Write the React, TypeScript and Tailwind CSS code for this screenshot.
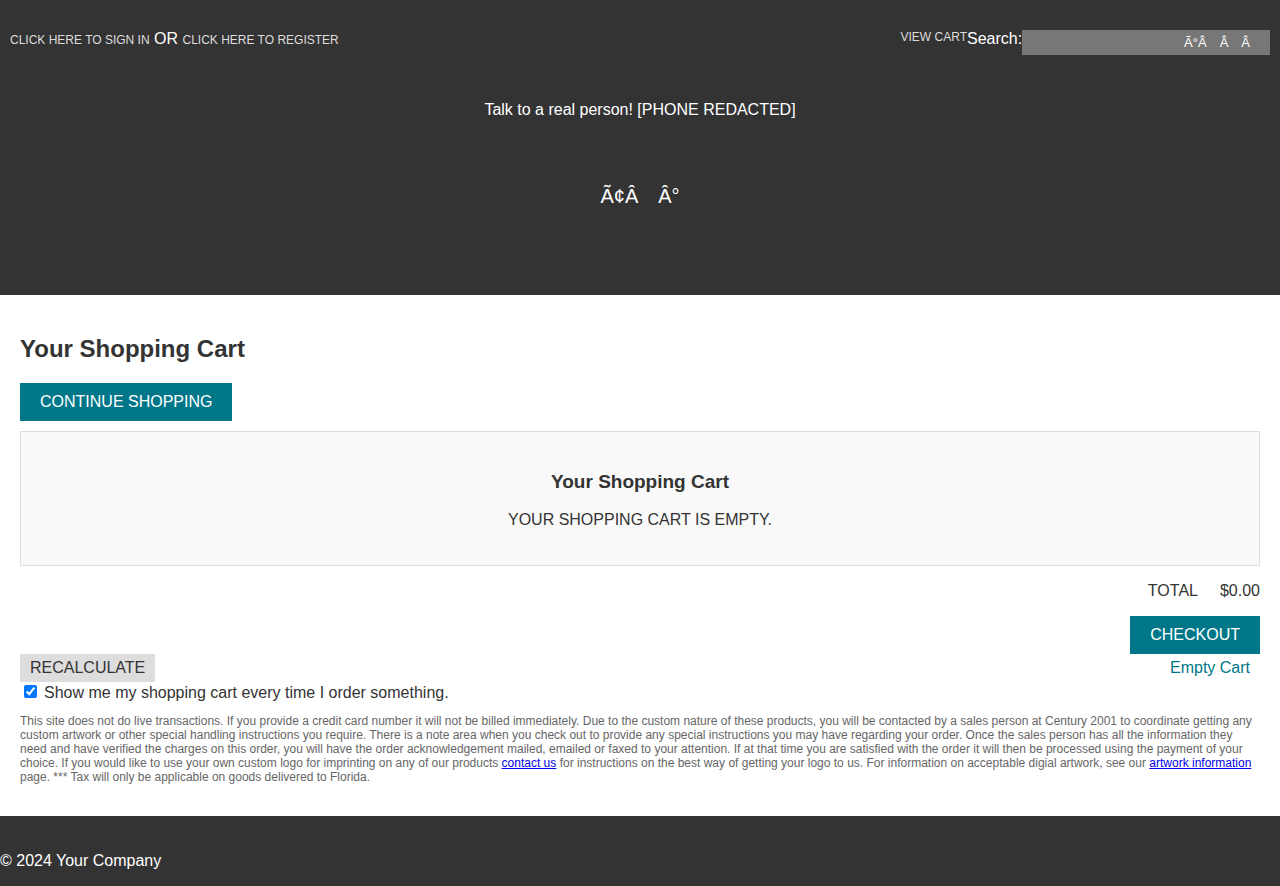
import { useState } from "react";

function Header() {
  return (
    <header className="flex flex-col bg-[#333] pb-[87px] text-white">
      <div className="flex items-start justify-between p-2.5 pt-[30px]">
        <p>
          <a href="#signin" className="text-[12px] text-[#ddd]">CLICK HERE TO SIGN IN</a>
          {" OR "}
          <a href="#register" className="text-[12px] text-[#ddd]">CLICK HERE TO REGISTER</a>
        </p>
        <form className="flex items-start" onSubmit={(e) => e.preventDefault()}>
          <a href="#cart" className="text-[12px] leading-[14px] text-[#ddd]">VIEW CART</a>
          <label htmlFor="search">Search:</label>
          <div className="flex h-[25px] bg-[#777]">
            <input id="search" type="text" className="w-[156px] bg-transparent px-1.5 text-[13px] outline-none" />
            <button type="submit" className="whitespace-pre pl-1.5 pr-[7px] text-[13px] leading-[25px] text-white">
              {"Ã°Â\u2003Â\u2003Â\u2003"}
            </button>
          </div>
        </form>
      </div>
      <p className="mt-9 text-center">Talk to a real person! [PHONE REDACTED]</p>
      <p className="mt-[66px] whitespace-pre text-center text-[20px] leading-[23px]">{"Ã¢Â\u2003Â°"}</p>
    </header>
  );
}

function Cart() {
  const [showCart, setShowCart] = useState(true);
  return (
    <main className="px-5 pb-8 pt-10">
      <h1 className="text-[24px] font-bold leading-7">Your Shopping Cart</h1>
      <button type="button" className="mt-5 block bg-[#007788] px-5 py-2.5 text-white">CONTINUE SHOPPING</button>
      <section className="mt-2.5 border border-[#ddd] bg-[#f9f9f9] px-5 pb-9 pt-[39px] text-center">
        <h2 className="text-[19px] font-bold leading-[21px]">Your Shopping Cart</h2>
        <p className="mt-[19px]">YOUR SHOPPING CART IS EMPTY.</p>
      </section>
      <dl className="mt-4 flex justify-end gap-[22px]">
        <dt>TOTAL</dt>
        <dd>$0.00</dd>
      </dl>
      <div className="mt-4 flex justify-end">
        <button type="button" className="bg-[#007788] px-5 py-2.5 text-white">CHECKOUT</button>
      </div>
      <div className="flex items-center justify-between">
        <button type="button" className="bg-[#ddd] px-2.5 py-[5px]">RECALCULATE</button>
        <a href="#empty" className="pr-2.5 text-[#007788]">Empty Cart</a>
      </div>
      <div className="mt-0.5 flex items-start">
        <input
          id="show-cart"
          type="checkbox"
          checked={showCart}
          onChange={(e) => setShowCart(e.target.checked)}
          className="ml-1 mr-[7px] mt-px size-[13px]"
        />
        <label htmlFor="show-cart">Show me my shopping cart every time I order something.</label>
      </div>
      <p className="mt-3 text-[12px] leading-[14px] text-[#666]">
        This site does not do live transactions. If you provide a credit card number it will not be billed
        immediately. Due to the custom nature of these products, you will be contacted by a sales person at Century
        2001 to coordinate getting any custom artwork or other special handling instructions you require. There is a
        note area when you check out to provide any special instructions you may have regarding your order. Once the
        sales person has all the information they need and have verified the charges on this order, you will have the
        order acknowledgement mailed, emailed or faxed to your attention. If at that time you are satisfied with the
        order it will then be processed using the payment of your choice. If you would like to use your own custom
        logo for imprinting on any of our products{" "}
        <a href="#contact" className="text-[#0000ee] underline">contact us</a> for instructions on the best way of
        getting your logo to us. For information on acceptable digial artwork, see our{" "}
        <a href="#artwork" className="text-[#0000ee] underline">artwork information</a> page. *** Tax will only be
        applicable on goods delivered to Florida.
      </p>
    </main>
  );
}

export default function App() {
  return (
    <div className="min-h-screen bg-white font-['Liberation_Sans',Arial,sans-serif] text-[16px] leading-[18px] text-[#333]">
      <Header />
      <Cart />
      <footer className="bg-[#333] pb-4 pt-9 text-white">
        <p>© 2024 Your Company</p>
      </footer>
    </div>
  );
}
